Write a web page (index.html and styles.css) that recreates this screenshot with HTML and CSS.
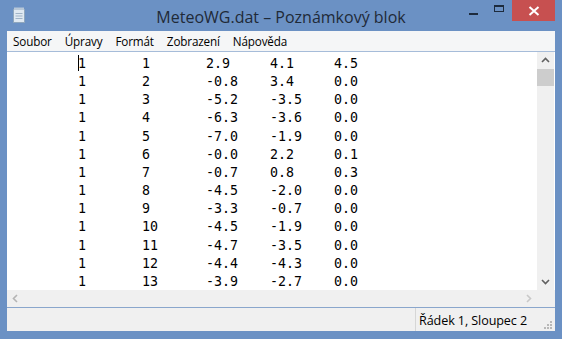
FILE: index.html
```html
<!DOCTYPE html>
<html lang="cs">
<head>
<meta charset="utf-8">
<title>MeteoWG.dat – Poznámkový blok</title>
<link rel="stylesheet" href="styles.css">
</head>
<body>
<div class="window">
  <div class="titlebar">
    <svg class="app-icon" width="14" height="16" viewBox="0 0 14 16">
      <rect x="1.5" y="2.5" width="11" height="13" fill="#dfe9f2" stroke="#8ea6bd"/>
      <rect x="2" y="0.5" width="10" height="2.5" fill="#b8c8d8"/>
      <line x1="3.5" y1="6.5" x2="10.5" y2="6.5" stroke="#9fb3c7"/>
      <line x1="3.5" y1="9" x2="10.5" y2="9" stroke="#9fb3c7"/>
      <line x1="3.5" y1="11.5" x2="10.5" y2="11.5" stroke="#9fb3c7"/>
    </svg>
    <div class="title">MeteoWG.dat – Poznámkový blok</div>
    <div class="controls">
      <div class="ctl min"><span class="dash"></span></div>
      <div class="ctl max"><span class="box"></span></div>
      <div class="ctl close">
        <svg width="12" height="10" viewBox="0 0 12 10"><path d="M1.5 1 L10.5 9 M10.5 1 L1.5 9" stroke="#fff" stroke-width="2"/></svg>
      </div>
    </div>
  </div>
  <div class="client">
    <div class="menubar">
      <span>Soubor</span><span>Úpravy</span><span>Formát</span><span>Zobrazení</span><span>Nápověda</span>
    </div>
    <div class="editwrap">
      <div class="editrow">
        <div class="edit"><pre class="text">	<span class="caret"></span>1	1	2.9	4.1	4.5
	1	2	-0.8	3.4	0.0
	1	3	-5.2	-3.5	0.0
	1	4	-6.3	-3.6	0.0
	1	5	-7.0	-1.9	0.0
	1	6	-0.0	2.2	0.1
	1	7	-0.7	0.8	0.3
	1	8	-4.5	-2.0	0.0
	1	9	-3.3	-0.7	0.0
	1	10	-4.5	-1.9	0.0
	1	11	-4.7	-3.5	0.0
	1	12	-4.4	-4.3	0.0
	1	13	-3.9	-2.7	0.0</pre></div>
        <div class="vscroll">
          <svg class="arr" width="17" height="17" viewBox="0 0 17 17"><path d="M5 10 L8.5 6.5 L12 10" fill="none" stroke="#606060" stroke-width="1.6"/></svg>
          <div class="thumb"></div>
          <div class="vtrack"></div>
          <svg class="arr" width="17" height="17" viewBox="0 0 17 17"><path d="M5 7 L8.5 10.5 L12 7" fill="none" stroke="#606060" stroke-width="1.6"/></svg>
        </div>
      </div>
      <div class="hscroll">
        <svg class="arr" width="17" height="17" viewBox="0 0 17 17"><path d="M10 5 L6.5 8.5 L10 12" fill="none" stroke="#b4b4b4" stroke-width="1.6"/></svg>
        <div class="htrack"></div>
        <svg class="arr" width="17" height="17" viewBox="0 0 17 17"><path d="M7 5 L10.5 8.5 L7 12" fill="none" stroke="#c8c8c8" stroke-width="1.6"/></svg>
        <div class="corner"></div>
      </div>
    </div>
    <div class="statusbar">
      <div class="status-fill"></div>
      <div class="status-cell">Řádek 1, Sloupec 2</div>
      <svg class="grip" width="10" height="10" viewBox="0 0 10 10">
        <rect x="7" y="1" width="2" height="2" fill="#b8b8b8"/>
        <rect x="4" y="4" width="2" height="2" fill="#b8b8b8"/>
        <rect x="7" y="4" width="2" height="2" fill="#b8b8b8"/>
        <rect x="1" y="7" width="2" height="2" fill="#b8b8b8"/>
        <rect x="4" y="7" width="2" height="2" fill="#b8b8b8"/>
        <rect x="7" y="7" width="2" height="2" fill="#b8b8b8"/>
      </svg>
    </div>
  </div>
</div>
</body>
</html>
```
FILE: styles.css
```css
* { box-sizing: border-box; }
html, body { margin: 0; padding: 0; }
body { width: 562px; height: 339px; overflow: hidden; background: #6b91c4; }

.window {
  width: 562px;
  height: 339px;
  background: #6b91c4;
  display: flex;
  flex-direction: column;
  padding: 0 7px 8px 7px;
}

.titlebar {
  height: 31px;
  flex: none;
  position: relative;
  display: flex;
  align-items: flex-start;
}
.app-icon { margin: 7px 0 0 5px; flex: none; }
.title {
  position: absolute;
  left: 0; right: 0; top: 6px;
  text-align: center;
  font-family: "Open Sans", "Noto Sans", sans-serif;
  font-size: 16px;
  color: #1f2a38;
  letter-spacing: 0;
}
.controls {
  margin-left: auto;
  display: flex;
  align-items: flex-start;
  position: relative;
}
.ctl { height: 21px; display: flex; align-items: center; justify-content: center; }
.min { width: 26px; }
.max { width: 26px; }
.min .dash { width: 9px; height: 2px; background: #1d2b3d; margin-top: 7px; }
.max .box { width: 10px; height: 7px; border: 1px solid #1d2b3d; border-top-width: 2px; margin-bottom: 5px; }
.close { width: 43px; height: 21px; background: #c75050; margin-top: 0; }

.client {
  flex: 1;
  display: flex;
  flex-direction: column;
  background: #f0f0f0;
}

.menubar {
  height: 20px;
  flex: none;
  background: #f5f6f7;
  display: flex;
  align-items: center;
  padding-left: 6px;
  font-family: "Open Sans", "Noto Sans", sans-serif;
  font-size: 11.7px;
  color: #000;
}
.menubar span { margin-right: 13px; letter-spacing: -0.15px; }

.editwrap {
  flex: none;
  height: 257px;
  display: flex;
  flex-direction: column;
  border-top: 1px solid #a6bcd9;
  border-bottom: 1px solid #8aa6cc;
}
.editrow { flex: 1; display: flex; min-height: 0; background: #fff; }
.edit { flex: 1; background: #fff; overflow: hidden; padding: 3px 0 0 7px; }
.text {
  margin: 0;
  font-family: "DejaVu Sans Mono", "Liberation Mono", monospace;
  font-size: 13.3px;
  line-height: 18.15px;
  color: #000;
  tab-size: 64px;
  -moz-tab-size: 64px;
  white-space: pre;
  position: relative;
}
.caret {
  display: inline-block;
  width: 1px;
  height: 16px;
  background: #000;
  vertical-align: -3px;
  margin-right: -1px;
}

.vscroll {
  width: 17px;
  flex: none;
  display: flex;
  flex-direction: column;
  background: #f0f0f0;
  margin-right: 1px;
}
.arr { flex: none; display: block; }
.thumb { height: 17px; background: #cdcdcd; flex: none; }
.vtrack { flex: 1; }

.hscroll {
  height: 17px;
  flex: none;
  display: flex;
  background: #f0f0f0;
}
.htrack { flex: 1; }
.corner { width: 18px; flex: none; background: #f0f0f0; }

.statusbar {
  flex: 1;
  display: flex;
  align-items: center;
  background: #f0f0f0;
  font-family: "Open Sans", "Noto Sans", sans-serif;
  font-size: 12.6px;
  color: #000;
}
.status-fill { flex: none; width: 409px; align-self: stretch; border-right: 1px solid #d6d6d6; }
.status-cell { flex: 1; padding-left: 3px; padding-top: 1px; letter-spacing: -0.1px; }
.grip { flex: none; margin: 10px 2px 0 0; }
```
